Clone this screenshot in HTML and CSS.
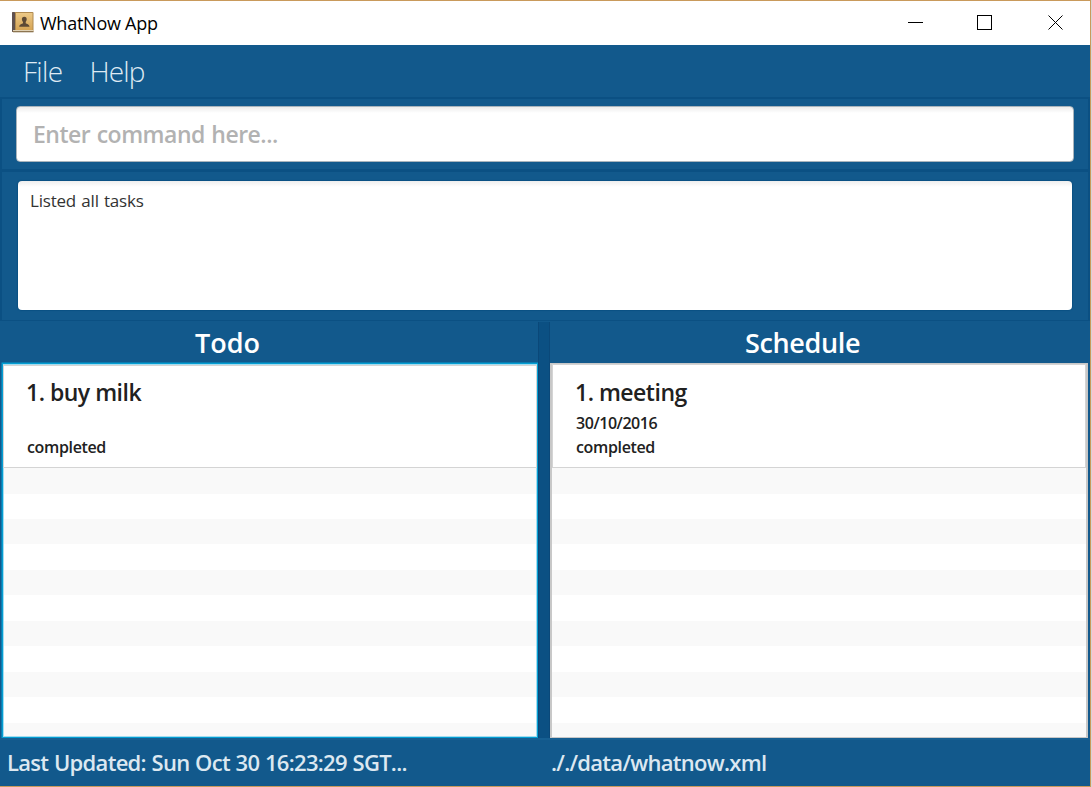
FILE: index.html
```html
<!DOCTYPE html>
<html lang="en">
<head>
<meta charset="utf-8">
<title>WhatNow App</title>
<link rel="stylesheet" href="styles.css">
</head>
<body>
<div class="window">
  <header class="titlebar">
    <svg class="app-icon" width="22" height="21" viewBox="0 0 22 21">
      <defs>
        <linearGradient id="cover" x1="0" y1="0" x2="0" y2="1">
          <stop offset="0" stop-color="#ecc987"/><stop offset="1" stop-color="#d6a455"/>
        </linearGradient>
      </defs>
      <rect x="0" y="0" width="21.500" height="20" rx="1" fill="#b08a50"/>
      <rect x="4" y="1" width="16.500" height="17" fill="url(#cover)"/>
      <rect x="0" y="0" width="3" height="20" rx="1" fill="#5f514f"/>
      <rect x="1" y="18" width="20.500" height="1" fill="#e0d2b6"/>
      <rect x="1" y="19" width="20.500" height="1.300" fill="#8d7550"/>
      <path d="M12.300 4.800c1.700 0 2.600 1.200 2.400 2.800-.1 1.200-.7 1.900-1 2.500v1.200c1 .7 3.600.8 3.800 3.500H7.200c.2-2.700 2.800-2.800 3.800-3.500v-1.200c-.4-.6-1-1.300-1.100-2.500C9.700 6 10.600 4.800 12.300 4.800z" fill="#5d4935"/>
    </svg>
    <span class="app-title">WhatNow App</span>
    <svg class="controls" width="160" height="18" viewBox="0 0 160 18" fill="none" stroke="#000">
      <path d="M0 8.500h15"/>
      <rect x="69.500" y="1.500" width="14" height="14"/>
      <path d="M140.500 1.500l14 14M154.500 1.500l-14 14"/>
    </svg>
  </header>
  <nav class="menubar"><span class="menu-file">File</span><span class="menu-help">Help</span></nav>
  <section class="command-pane"><div class="command-box"><span class="prompt">Enter command here...</span></div></section>
  <section class="result-pane"><div class="result-box"><span class="result-text">Listed all tasks</span></div></section>
  <main class="columns">
    <section class="column todo">
      <h2 class="heading"><span class="todo-title">Todo</span></h2>
      <div class="list focused">
        <article class="card">
          <div class="name"><span class="todo-name">1. buy milk</span></div>
          <div class="detail"></div>
          <div class="detail"><span class="done">completed</span></div>
        </article>
        <div class="stripes"></div>
      </div>
    </section>
    <div class="divider"></div>
    <section class="column schedule">
      <h2 class="heading"><span class="schedule-title">Schedule</span></h2>
      <div class="list">
        <article class="card">
          <div class="name"><span class="meeting-name">1. meeting</span></div>
          <div class="detail"><span class="date">30/10/2016</span></div>
          <div class="detail"><span class="done">completed</span></div>
        </article>
        <div class="stripes"></div>
      </div>
    </section>
  </main>
  <footer class="statusbar"><span class="updated">Last Updated: Sun Oct 30 16:23:29 SGT...</span><span class="path">././data/whatnow.xml</span></footer>
</div>
</body>
</html>
```
FILE: styles.css
```css
* { box-sizing: border-box; }
body {
  margin: 0;
  background: #d5d5d5;
  font-family: "Open Sans", "Noto Sans", sans-serif;
}
.window {
  width: 1091px;
  height: 787px;
  display: flex;
  flex-direction: column;
  border: solid #c99a5b;
  border-width: 1px 1px 1px 0;
  background: #12598c;
  white-space: nowrap;
  overflow: hidden;
}
.titlebar {
  height: 44px;
  flex: none;
  display: flex;
  align-items: center;
  background: #fff;
  padding-left: 12px;
}
.app-icon { margin: -2px 6px 0 0; }
.app-title { font-size: 18px; letter-spacing: -0.25px; line-height: 44px; color: #000; }
.controls { margin-left: auto; margin-right: 22px; }
.menubar {
  height: 52px;
  flex: none;
  padding-left: 23px;
  display: flex;
  gap: 28px;
  font-size: 28px;
  font-weight: 300;
  line-height: 52px;
  color: #dfeaf3;
}
.menu-file { width: 38.5px; letter-spacing: -0.7px; }
.menu-help { letter-spacing: -0.9px; }
.command-pane {
  height: 74px;
  flex: none;
  padding: 7px 14px 8px 14px;
  border: 2px solid #0b5083;
}
.command-box {
  height: 56px;
  border: 1px solid #a9b4bc;
  border-radius: 4px;
  background: linear-gradient(#ececec, #fff 6px);
  padding-left: 16px;
  font-size: 23px;
  font-weight: 600;
  line-height: 54px;
  color: #b2b2b2;
}
.prompt { letter-spacing: -0.5px; word-spacing: 1px; }
.result-pane {
  height: 150px;
  flex: none;
  padding: 9px 16px 0;
  border: solid #0b5083;
  border-width: 1px 2px 1px 2px;
}
.result-box {
  height: 129px;
  border-radius: 4px;
  background: linear-gradient(#eee, #fff 6px);
  box-shadow: 0 0 1px 1px #0b5083;
  padding: 7px 12px;
  font-size: 17px;
  line-height: 25px;
  color: #333;
}
.result-text { letter-spacing: -0.2px; word-spacing: 1px; }
.columns { height: 417px; flex: none; display: flex; }
.column { display: flex; flex-direction: column; }
.todo { width: 538px; padding-left: 2px; }
.schedule { width: 538px; }
.divider { width: 12px; margin-top: 1px; background: #0b5083; border: solid #0a4879; border-width: 0 1px; }
.heading {
  height: 42px;
  margin: 0;
  padding-left: 195px;
  font-size: 27px;
  font-weight: 600;
  line-height: 44px;
  color: #fff;
}
.todo .heading { padding-left: 193px; }
.schedule-title { letter-spacing: -0.35px; }
.list {
  height: 375px;
  display: flex;
  flex-direction: column;
  border: solid #c8c8c8;
  border-width: 1px 2px 1px 2px;
  background: #fff;
}
.focused { border: 1px solid #039ed3; box-shadow: 0 0 0 0.5px #039ed3, inset 0 0 0 1px #a5dcef; padding-top: 1px; }
.focused .card { height: 103px; padding-top: 10px; }
.card {
  height: 104px;
  border: 1px solid #d4d4d4;
  padding: 11px 0 0 23px;
  color: #212121;
  font-weight: 600;
}
.name { height: 35px; font-size: 23px; line-height: 32px; letter-spacing: -0.5px; }
.todo-name, .meeting-name { margin-left: -1px; }
.detail { height: 24px; font-size: 16px; line-height: 24px; letter-spacing: -0.35px; }
.date { letter-spacing: -0.45px; }
.stripes {
  flex: 1;
  background: repeating-linear-gradient(#f9f9f9 0 25.5px, #fff 25.5px 51px);
}
.focused .stripes { margin: 0 1px 1px; }
.statusbar {
  flex: 1;
  display: flex;
  padding-left: 7px;
  border-top: 2px solid #165f92;
  font-size: 22px;
  font-weight: 600;
  line-height: 44px;
  color: #dce8f1;
}
.updated { width: 544px; letter-spacing: -0.7px; word-spacing: 0.6px; }
.path { letter-spacing: -0.72px; }
```
